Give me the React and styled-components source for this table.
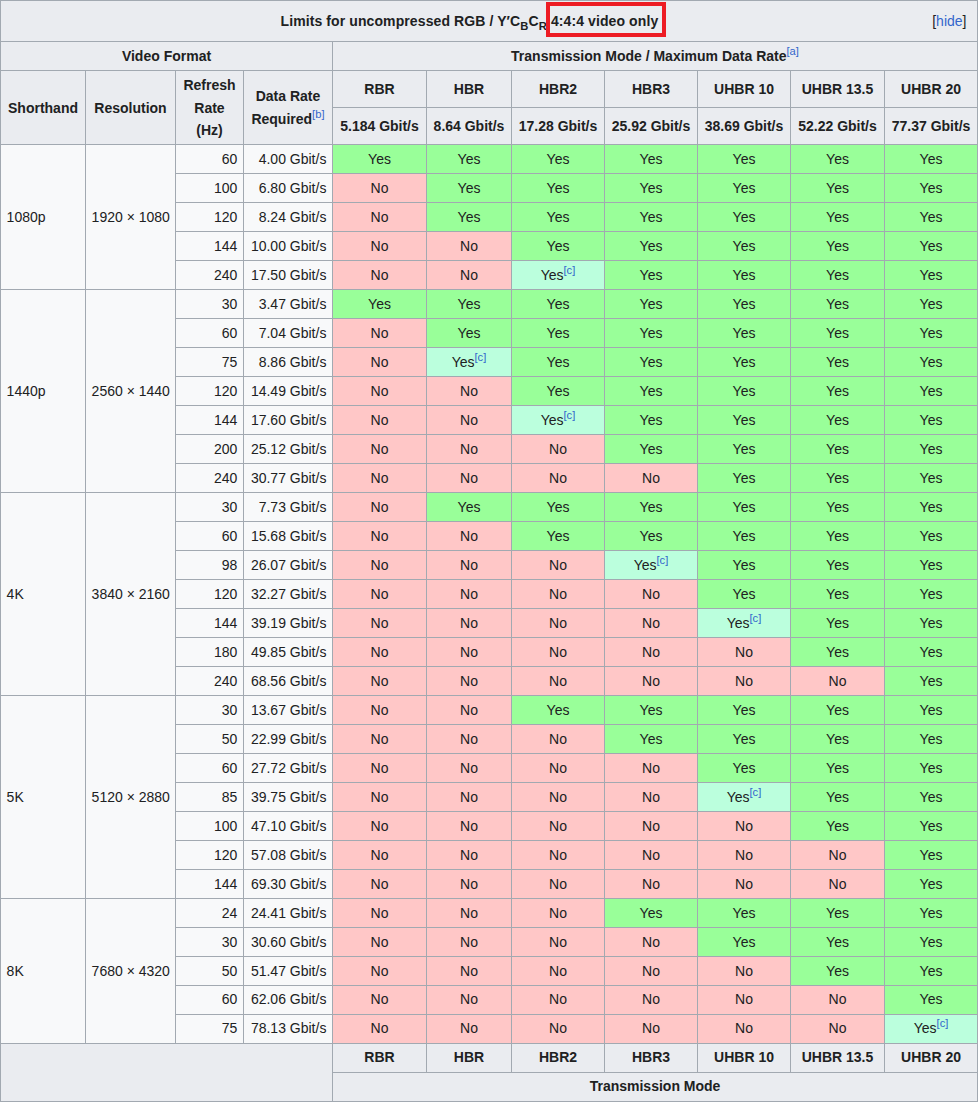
import React from "react";
import styled, { createGlobalStyle } from "styled-components";

const GlobalStyle = createGlobalStyle`
  body {
    margin: 0;
    background: #ffffff;
    font-family: "Liberation Sans", Arial, sans-serif;
    font-size: 14px;
    color: #202122;
  }
`;

const Table = styled.table`
  width: 978px;
  table-layout: fixed;
  border-collapse: collapse;
  background: #f8f9fa;
  border: 1px solid #a2a9b1;
  line-height: 1.6;
`;

const Th = styled.th`
  background: #eaecf0;
  border: 1px solid #a2a9b1;
  padding: 0.2em 0.4em;
  font-weight: bold;
  text-align: center;
  vertical-align: middle;
`;

const TitleCell = styled(Th)`
  padding: 9px 0.4em;
  letter-spacing: 0.1px;
`;

const Toggle = styled.span`
  float: right;
  font-weight: normal;
  letter-spacing: 0;
  margin-right: 5px;
  a {
    color: #3366cc;
    text-decoration: none;
  }
`;

const Marked = styled.span`
  position: relative;
  &::after {
    content: "";
    position: absolute;
    left: -5px;
    right: -8px;
    top: -11px;
    bottom: -8px;
    border: 4px solid #ed1c24;
    pointer-events: none;
  }
`;

const Td = styled.td`
  border: 1px solid #a2a9b1;
  padding: 0.2em 0.4em;
  text-align: ${(p) => p.$align || "left"};
  vertical-align: middle;
  white-space: nowrap;
`;

const statusColors = {
  Y: "#99ff99",
  N: "#ffc7c7",
  C: "#bbffdd",
};

const StatusCell = styled(Td)`
  background: ${(p) => statusColors[p.$status]};
  text-align: center;
`;

const Ref = styled.sup`
  font-size: 80%;
  line-height: 1;
  vertical-align: super;
  color: #3366cc;
  font-weight: normal;
`;

const Sub = styled.sub`
  font-size: 80%;
  line-height: 1;
`;

const widths = [85, 90, 68, 89, 94, 85, 93, 93, 93, 94, 93];

const modes = [
  ["RBR", "5.184 Gbit/s"],
  ["HBR", "8.64 Gbit/s"],
  ["HBR2", "17.28 Gbit/s"],
  ["HBR3", "25.92 Gbit/s"],
  ["UHBR 10", "38.69 Gbit/s"],
  ["UHBR 13.5", "52.22 Gbit/s"],
  ["UHBR 20", "77.37 Gbit/s"],
];

const formats = [
  {
    name: "1080p",
    res: "1920 × 1080",
    rows: [
      ["60", "4.00", "YYYYYYY"],
      ["100", "6.80", "NYYYYYY"],
      ["120", "8.24", "NYYYYYY"],
      ["144", "10.00", "NNYYYYY"],
      ["240", "17.50", "NNCYYYY"],
    ],
  },
  {
    name: "1440p",
    res: "2560 × 1440",
    rows: [
      ["30", "3.47", "YYYYYYY"],
      ["60", "7.04", "NYYYYYY"],
      ["75", "8.86", "NCYYYYY"],
      ["120", "14.49", "NNYYYYY"],
      ["144", "17.60", "NNCYYYY"],
      ["200", "25.12", "NNNYYYY"],
      ["240", "30.77", "NNNNYYY"],
    ],
  },
  {
    name: "4K",
    res: "3840 × 2160",
    rows: [
      ["30", "7.73", "NYYYYYY"],
      ["60", "15.68", "NNYYYYY"],
      ["98", "26.07", "NNNCYYY"],
      ["120", "32.27", "NNNNYYY"],
      ["144", "39.19", "NNNNCYY"],
      ["180", "49.85", "NNNNNYY"],
      ["240", "68.56", "NNNNNNY"],
    ],
  },
  {
    name: "5K",
    res: "5120 × 2880",
    rows: [
      ["30", "13.67", "NNYYYYY"],
      ["50", "22.99", "NNNYYYY"],
      ["60", "27.72", "NNNNYYY"],
      ["85", "39.75", "NNNNCYY"],
      ["100", "47.10", "NNNNNYY"],
      ["120", "57.08", "NNNNNNY"],
      ["144", "69.30", "NNNNNNY"],
    ],
  },
  {
    name: "8K",
    res: "7680 × 4320",
    rows: [
      ["24", "24.41", "NNNYYYY"],
      ["30", "30.60", "NNNNYYY"],
      ["50", "51.47", "NNNNNYY"],
      ["60", "62.06", "NNNNNNY"],
      ["75", "78.13", "NNNNNNC"],
    ],
  },
];

const Status = ({ code }) => (
  <StatusCell $status={code}>
    {code === "N" ? "No" : "Yes"}
    {code === "C" && <Ref>[c]</Ref>}
  </StatusCell>
);

const App = () => {
  return (
    <>
      <GlobalStyle />
      <Table>
        <colgroup>
          {widths.map((w, i) => (
            <col key={i} style={{ width: w }} />
          ))}
        </colgroup>
        <thead>
          <tr>
            <TitleCell colSpan={11}>
              <Toggle>
                [<a href="#hide">hide</a>]
              </Toggle>
              Limits for uncompressed RGB / Y′C<Sub>B</Sub>C<Sub>R</Sub>{" "}
              <Marked>4:4:4 video only</Marked>
            </TitleCell>
          </tr>
          <tr>
            <Th colSpan={4}>Video Format</Th>
            <Th colSpan={7}>
              Transmission Mode / Maximum Data Rate<Ref>[a]</Ref>
            </Th>
          </tr>
          <tr>
            <Th rowSpan={2}>Shorthand</Th>
            <Th rowSpan={2}>Resolution</Th>
            <Th rowSpan={2}>Refresh Rate (Hz)</Th>
            <Th rowSpan={2}>
              Data Rate Required<Ref>[b]</Ref>
            </Th>
            {modes.map(([m]) => (
              <Th key={m}>{m}</Th>
            ))}
          </tr>
          <tr>
            {modes.map(([m, rate]) => (
              <Th key={m}>{rate}</Th>
            ))}
          </tr>
        </thead>
        <tbody>
          {formats.map((f) =>
            f.rows.map(([hz, rate, codes], i) => (
              <tr key={f.name + hz}>
                {i === 0 && (
                  <>
                    <Td rowSpan={f.rows.length}>{f.name}</Td>
                    <Td rowSpan={f.rows.length} $align="center">
                      {f.res}
                    </Td>
                  </>
                )}
                <Td $align="right">{hz}</Td>
                <Td $align="right">{rate} Gbit/s</Td>
                {codes.split("").map((c, j) => (
                  <Status key={j} code={c} />
                ))}
              </tr>
            ))
          )}
        </tbody>
        <tfoot>
          <tr>
            <Th colSpan={4} rowSpan={2}></Th>
            {modes.map(([m]) => (
              <Th key={m}>{m}</Th>
            ))}
          </tr>
          <tr>
            <Th colSpan={7}>Transmission Mode</Th>
          </tr>
        </tfoot>
      </Table>
    </>
  );
};

export default App;
